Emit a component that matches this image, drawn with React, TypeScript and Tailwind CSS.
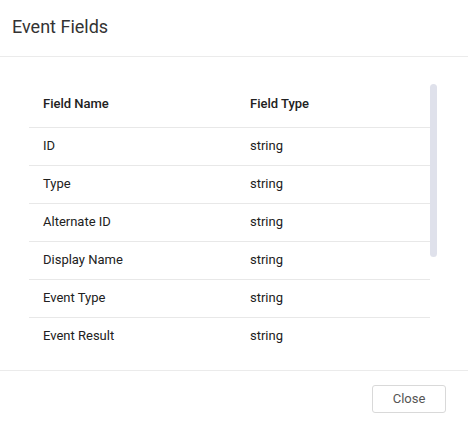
import React from 'react'

const fields = [
  { name: 'ID', type: 'string' },
  { name: 'Type', type: 'string' },
  { name: 'Alternate ID', type: 'string' },
  { name: 'Display Name', type: 'string' },
  { name: 'Event Type', type: 'string' },
  { name: 'Event Result', type: 'string' },
]

export default function App() {
  return (
    <div className="w-[468px] h-[425px] bg-white flex flex-col font-['Roboto',sans-serif] text-[#333]">
      <div className="h-[57px] border-b border-[#ebebeb] px-[12px] pt-[15px]">
        <h1 className="text-[18px] leading-[24px] font-normal text-[#333]">Event Fields</h1>
      </div>

      <div className="h-[313px] pt-[27px] pl-[29px]">
        <div className="relative w-[408px] h-[268px] overflow-hidden">
          <div className="w-[401px]">
            <div className="flex h-[44px] border-b border-[#e8e8e8] pt-[12px] text-[13px] leading-[16px] font-medium text-[#212121]">
              <div className="w-[207px] px-[14px]">Field Name</div>
              <div className="flex-1 px-[14px]">Field Type</div>
            </div>
            {fields.map(f => (
              <div
                key={f.name}
                className="flex items-center h-[38px] pb-[2px] border-b border-[#e8e8e8] last:border-b-0 text-[13px] leading-[16px] text-[#212121]"
              >
                <div className="w-[207px] px-[14px]">{f.name}</div>
                <div className="flex-1 px-[14px]">{f.type}</div>
              </div>
            ))}
          </div>
          {/* scrollbar thumb */}
          <div className="absolute left-[401px] top-0 w-[7px] h-[173px] rounded-full bg-[#dfe1eb]" />
        </div>
      </div>

      <div className="flex-1 border-t border-[#ebebeb] pt-[14px] pr-[22px] flex justify-end items-start">
        <button className="w-[74px] h-[28px] border border-[#d9d9d9] rounded-[3px] bg-white text-[13px] text-[#555]">
          Close
        </button>
      </div>
    </div>
  )
}
